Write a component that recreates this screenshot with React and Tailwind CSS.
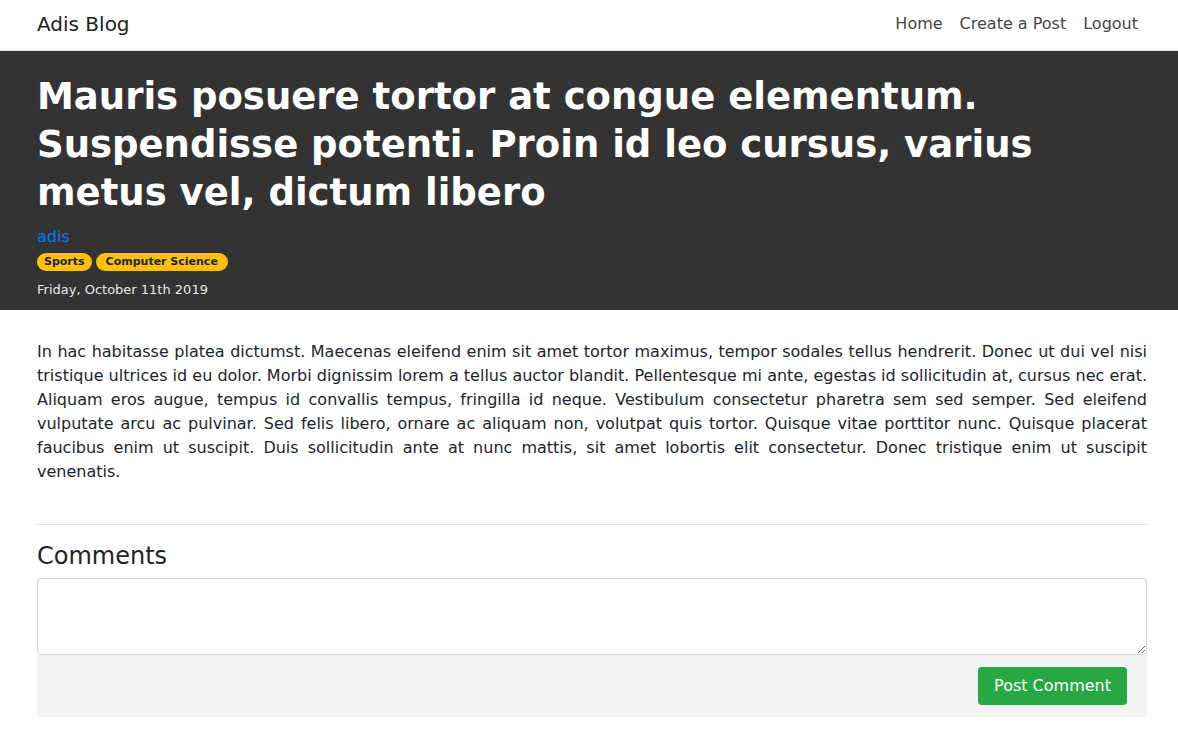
export default function App() {
  const font = { fontFamily: '"DejaVu Sans", "Open Sans", sans-serif' };
  return (
    <div className="min-h-screen bg-white text-[#212529]" style={font}>
      {/* Navbar */}
      <nav className="flex items-center justify-between h-[51px] pl-[37px] pr-[31px] pb-[3px] border-b border-[#dee2e6]">
        <a className="text-[20px] text-[#222]">Adis Blog</a>
        <div className="flex items-center gap-[17px] text-[16px] text-[#454545] pr-[9px]">
          <a>Home</a>
          <a>Create a Post</a>
          <a>Logout</a>
        </div>
      </nav>

      {/* Header */}
      <header className="bg-[#333333] pl-[37px] pr-[31px] pt-[22px] pb-[10px]">
        <h1 className="text-white font-bold text-[37px] leading-[48px]">
          Mauris posuere tortor at congue elementum. Suspendisse potenti. Proin id leo cursus, varius metus vel, dictum libero
        </h1>
        <div className="mt-[8px] text-[16px] leading-[24px] text-[#007bff]">adis</div>
        <div className="flex gap-[4px] mt-[4px]">
          <span className="bg-[#ffc107] text-[#212529] text-[11px] font-bold rounded-full px-[7px] leading-[18px]">Sports</span>
          <span className="bg-[#ffc107] text-[#212529] text-[11px] font-bold rounded-full px-[10px] leading-[18px]">Computer Science</span>
        </div>
        <div className="mt-[9px] text-[13px] leading-[20px] text-[#e8e8e8]">Friday, October 11th 2019</div>
      </header>

      {/* Body */}
      <main className="pl-[37px] pr-[31px] pt-[30px]">
        <p className="text-[16px] leading-[24px] text-justify text-[#212529]">
          In hac habitasse platea dictumst. Maecenas eleifend enim sit amet tortor maximus, tempor sodales tellus hendrerit. Donec ut dui vel nisi tristique ultrices id eu dolor. Morbi dignissim lorem a tellus auctor blandit. Pellentesque mi ante, egestas id sollicitudin at, cursus nec erat. Aliquam eros augue, tempus id convallis tempus, fringilla id neque. Vestibulum consectetur pharetra sem sed semper. Sed eleifend vulputate arcu ac pulvinar. Sed felis libero, ornare ac aliquam non, volutpat quis tortor. Quisque vitae porttitor nunc. Quisque placerat faucibus enim ut suscipit. Duis sollicitudin ante at nunc mattis, sit amet lobortis elit consectetur. Donec tristique enim ut suscipit venenatis.
        </p>

        <hr className="mt-[40px] border-t border-[#e5e5e5]" />

        <h2 className="mt-[16px] text-[24px] leading-[30px] text-[#212529]">Comments</h2>
        <div className="mt-[7px]">
          <textarea className="block w-full h-[77px] border border-[#ced4da] rounded-[4px] px-3 py-2 outline-none resize-y" />
          <div className="bg-[#f4f4f4] rounded-b-[4px] h-[62px] flex items-center justify-end pr-[20px]">
            <button className="bg-[#28a745] text-white text-[16px] rounded-[4px] h-[38px] px-[16px]">Post Comment</button>
          </div>
        </div>
      </main>
    </div>
  );
}
